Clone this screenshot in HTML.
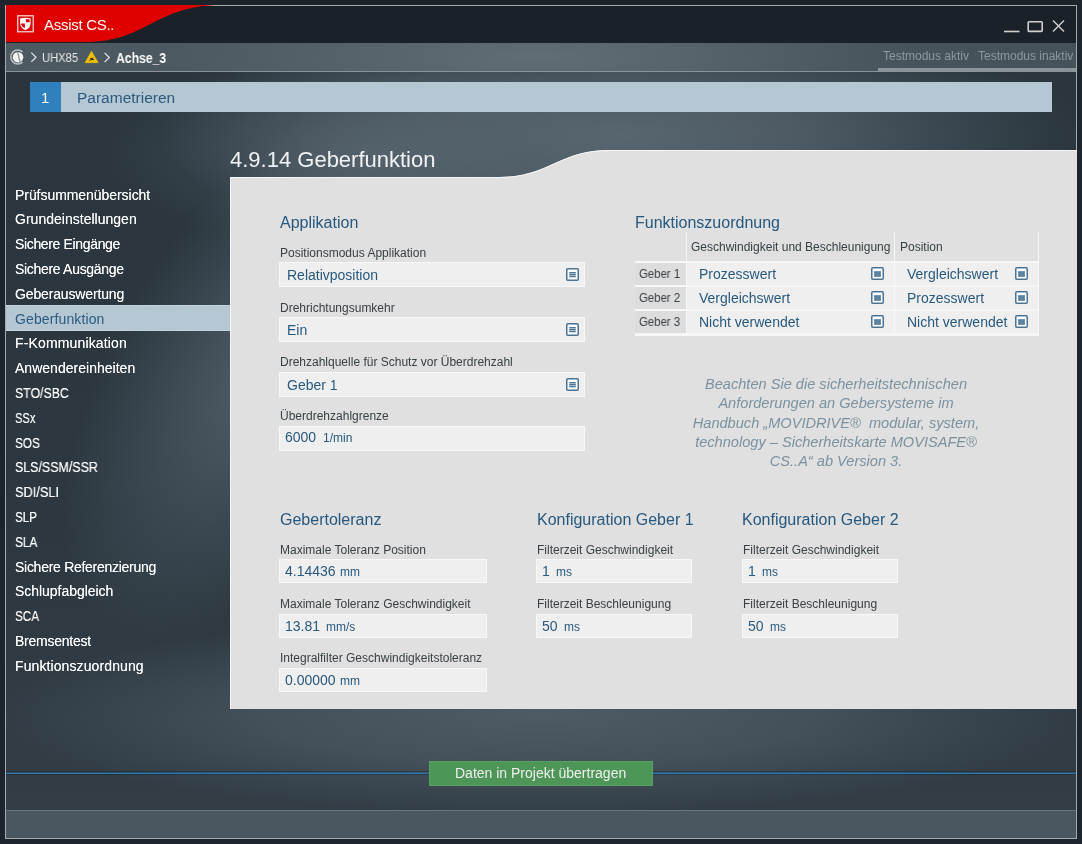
<!DOCTYPE html>
<html><head><meta charset="utf-8">
<style>
*{margin:0;padding:0;box-sizing:border-box}
html,body{width:1082px;height:844px;overflow:hidden;background:#1d242b;font-family:"Liberation Sans",sans-serif;position:relative}
.a{position:absolute}
.t{position:absolute;line-height:0;white-space:nowrap;will-change:transform}
#bg{position:absolute;left:6px;top:72px;width:1070px;height:738px;overflow:hidden;background:linear-gradient(180deg,#2a353d 0%,#2c373f 60%,#323d46 100%)}
.glow{position:absolute;border-radius:50%}
.box{position:absolute;background:#efefef;border:1px solid #f8f8f8}
</style></head><body>
<div class="a" style="left:5px;top:5px;width:1072px;height:834px;border:1px solid #a3aaae"></div>
<div class="a" style="left:6px;top:6px;width:1070px;height:37px;background:#1b2128"></div>
<svg class="a" style="left:6px;top:5px" width="260" height="38"><path d="M0,0 L215,0 C150,0 140,37 80,37 L0,37 Z" fill="#df0000"/></svg>
<div class="a" style="left:6px;top:43px;width:1070px;height:28px;background:radial-gradient(ellipse 380px 70px at 530px 14px,rgba(98,110,118,1),rgba(98,110,118,0)),linear-gradient(90deg,#4e5a62 0%,#4a565e 40%,#46525a 100%)"></div>
<div class="a" style="left:6px;top:71px;width:1070px;height:1px;background:#8b9398"></div>
<div id="bg"><div class="glow" style="left:-46px;top:118px;width:660px;height:320px;transform:rotate(-55deg);background:radial-gradient(closest-side,rgba(84,98,108,1),rgba(84,98,108,0.55) 45%,rgba(84,98,108,0))"></div><div class="glow" style="left:154px;top:-57px;width:920px;height:240px;background:radial-gradient(closest-side,rgba(88,102,112,1),rgba(88,102,112,0.75) 40%,rgba(88,102,112,0))"></div><div class="glow" style="left:94px;top:-20px;width:560px;height:200px;background:radial-gradient(closest-side,rgba(88,102,112,0.7),rgba(88,102,112,0))"></div><div class="glow" style="left:-16px;top:543px;width:1100px;height:200px;background:radial-gradient(closest-side,rgba(78,91,101,1),rgba(78,91,101,0.65) 50%,rgba(78,91,101,0))"></div></div>
<div class="t" style="left:44px;top:25px;font-size:15px;color:#fff;letter-spacing:-0.288px">Assist CS..</div>
<svg class="a" style="left:16px;top:14px" width="20" height="20"><rect x="1.75" y="1.75" width="15.5" height="16" fill="none" stroke="#f4c0c0" stroke-width="1.4"/><path d="M4.1,4.6 Q9.4,3 14.6,4.6 L14.6,9.6 Q14.3,14 9.4,16.3 Q4.5,14 4.1,9.6 Z" fill="#fff"/><path d="M9.9,4.9 Q12.2,5 13.7,5.6 L13.7,8.3 L9.9,8.3 Z" fill="#df0000"/><path d="M5.1,9.6 L8.9,9.6 L8.9,14.2 Q5.8,12.6 5.2,10.4 Z" fill="#df0000"/></svg>
<svg class="a" style="left:1000px;top:15px" width="70" height="22"><path d="M4,16.5 H19.5" stroke="#d0d0d0" stroke-width="1.6"/><rect x="28.2" y="6.8" width="14" height="9.6" fill="none" stroke="#d0d0d0" stroke-width="1.6" rx="0.8"/><path d="M53,5.5 L64,16.6 M64,5.5 L53,16.6" stroke="#d0d0d0" stroke-width="1.4"/></svg>
<div class="t" style="left:41.6px;top:58px;font-size:12px;color:#e8e8e8;transform:scaleX(0.9331);transform-origin:0 0">UHX85</div>
<svg class="a" style="left:6px;top:46px" width="120" height="22"><path d="M16.6,5.9 A7,7 0 1 0 16.6,16.1" fill="none" stroke="#b9bdc0" stroke-width="1.5"/><circle cx="12" cy="11.3" r="5.3" fill="#f2f2f2"/><path d="M11.6,5.8 L14.2,16.8" stroke="#8d9498" stroke-width="1.3"/><path d="M25.3,6.6 L30,11.2 L25.3,15.9" fill="none" stroke="#e8e8e8" stroke-width="1.2"/><path d="M85.5,5.4 L92,16.6 L79.2,16.6 Z" fill="#f0c000" stroke="#f0c000" stroke-width="0.8" stroke-linejoin="round"/><path d="M83.4,14.8 L87.3,11.6 M84.2,12.6 L86.6,12.6 M85.6,13.6 L88,13.6" stroke="#222" stroke-width="1"/><path d="M98.6,6.9 L103.3,11.5 L98.6,16.1" fill="none" stroke="#e8e8e8" stroke-width="1.2"/></svg>
<div class="t" style="left:115.7px;top:58px;font-size:14px;color:#fff;font-weight:bold;transform:scaleX(0.8701);transform-origin:0 0">Achse_3</div>
<div class="t" style="left:882.7px;top:56px;font-size:12px;color:#8e989e;">Testmodus aktiv</div>
<div class="t" style="left:977.5px;top:56px;font-size:12px;color:#8e989e;">Testmodus inaktiv</div>
<div class="a" style="left:878px;top:68px;width:198px;height:3px;background:#8a9499"></div>
<div class="a" style="left:30px;top:82px;width:31px;height:30px;background:#2f80bd"></div>
<div class="a" style="left:61px;top:82px;width:991px;height:30px;background:#b5c7d3"></div>
<div class="t" style="left:41px;top:98px;font-size:15px;color:#fff;">1</div>
<div class="t" style="left:77.4px;top:98px;font-size:15.5px;color:#2a5a80;">Parametrieren</div>
<div class="t" style="left:14.8px;top:195px;font-size:14px;color:#fff;text-shadow:0 0 0.5px rgba(255,255,255,0.7);letter-spacing:-0.054px">Prüfsummenübersicht</div>
<div class="t" style="left:14.8px;top:219px;font-size:14px;color:#fff;text-shadow:0 0 0.5px rgba(255,255,255,0.7);letter-spacing:0.016px">Grundeinstellungen</div>
<div class="t" style="left:14.8px;top:244px;font-size:14px;color:#fff;text-shadow:0 0 0.5px rgba(255,255,255,0.7);letter-spacing:-0.349px">Sichere Eingänge</div>
<div class="t" style="left:14.8px;top:269px;font-size:14px;color:#fff;text-shadow:0 0 0.5px rgba(255,255,255,0.7);letter-spacing:-0.308px">Sichere Ausgänge</div>
<div class="t" style="left:14.8px;top:294px;font-size:14px;color:#fff;text-shadow:0 0 0.5px rgba(255,255,255,0.7);letter-spacing:-0.150px">Geberauswertung</div>
<div class="a" style="left:6px;top:305px;width:224px;height:26px;background:#b5c7d3;border-top:1px solid #c3d3dd;border-bottom:1px solid #c3d3dd"></div>
<div class="t" style="left:14.8px;top:319px;font-size:14px;color:#2b5a80;letter-spacing:0.120px">Geberfunktion</div>
<div class="t" style="left:14.8px;top:343px;font-size:14px;color:#fff;text-shadow:0 0 0.5px rgba(255,255,255,0.7);letter-spacing:0.149px">F-Kommunikation</div>
<div class="t" style="left:14.8px;top:368px;font-size:14px;color:#fff;text-shadow:0 0 0.5px rgba(255,255,255,0.7);letter-spacing:0.020px">Anwendereinheiten</div>
<div class="t" style="left:14.8px;top:393px;font-size:14px;color:#fff;text-shadow:0 0 0.5px rgba(255,255,255,0.7);transform:scaleX(0.8790);transform-origin:0 0">STO/SBC</div>
<div class="t" style="left:14.8px;top:418px;font-size:14px;color:#fff;text-shadow:0 0 0.5px rgba(255,255,255,0.7);transform:scaleX(0.7945);transform-origin:0 0">SSx</div>
<div class="t" style="left:14.8px;top:443px;font-size:14px;color:#fff;text-shadow:0 0 0.5px rgba(255,255,255,0.7);transform:scaleX(0.8417);transform-origin:0 0">SOS</div>
<div class="t" style="left:14.8px;top:467px;font-size:14px;color:#fff;text-shadow:0 0 0.5px rgba(255,255,255,0.7);transform:scaleX(0.8868);transform-origin:0 0">SLS/SSM/SSR</div>
<div class="t" style="left:14.8px;top:492px;font-size:14px;color:#fff;text-shadow:0 0 0.5px rgba(255,255,255,0.7);transform:scaleX(0.9144);transform-origin:0 0">SDI/SLI</div>
<div class="t" style="left:14.8px;top:517px;font-size:14px;color:#fff;text-shadow:0 0 0.5px rgba(255,255,255,0.7);transform:scaleX(0.8307);transform-origin:0 0">SLP</div>
<div class="t" style="left:14.8px;top:542px;font-size:14px;color:#fff;text-shadow:0 0 0.5px rgba(255,255,255,0.7);transform:scaleX(0.8516);transform-origin:0 0">SLA</div>
<div class="t" style="left:14.8px;top:567px;font-size:14px;color:#fff;text-shadow:0 0 0.5px rgba(255,255,255,0.7);letter-spacing:-0.276px">Sichere Referenzierung</div>
<div class="t" style="left:14.8px;top:591px;font-size:14px;color:#fff;text-shadow:0 0 0.5px rgba(255,255,255,0.7);letter-spacing:-0.040px">Schlupfabgleich</div>
<div class="t" style="left:14.8px;top:616px;font-size:14px;color:#fff;text-shadow:0 0 0.5px rgba(255,255,255,0.7);transform:scaleX(0.8354);transform-origin:0 0">SCA</div>
<div class="t" style="left:14.8px;top:641px;font-size:14px;color:#fff;text-shadow:0 0 0.5px rgba(255,255,255,0.7);letter-spacing:-0.240px">Bremsentest</div>
<div class="t" style="left:14.8px;top:666px;font-size:14px;color:#fff;text-shadow:0 0 0.5px rgba(255,255,255,0.7);letter-spacing:0.101px">Funktionszuordnung</div>
<svg class="a" style="left:229px;top:149px" width="848" height="561"><path d="M1,28 L270,28 C320,28 330,1 380,1 L848,1 L848,560 L1,560 Z" fill="#dfe0df"/><path d="M1.5,560 L1.5,28.5 L270,28.5 C320,28.5 330,1.5 380,1.5 L848,1.5" fill="none" stroke="#f6f6f6" stroke-width="1"/></svg>
<div class="t" style="left:229.7px;top:160px;font-size:22px;color:rgba(255,255,255,0.92);">4.9.14 Geberfunktion</div>
<div class="t" style="left:279.6px;top:223px;font-size:16px;color:#27587f;">Applikation</div>
<div class="t" style="left:279.6px;top:253px;font-size:12px;color:#394146;">Positionsmodus Applikation</div>
<div class="box" style="left:279px;top:262px;width:306px;height:25px"></div>
<div class="t" style="left:287px;top:275px;font-size:14px;color:#28597f;">Relativposition</div>
<svg class="a" style="left:566px;top:268px" width="13" height="13"><rect x="0.75" y="0.75" width="11.5" height="11.5" rx="1" fill="#fff" stroke="#4a7393" stroke-width="1.5"/><path d="M3.2,4.8h6.6M3.2,6.7h6.6M3.2,8.6h6.6" stroke="#4d7595" stroke-width="1.4"/></svg>
<div class="t" style="left:279.6px;top:307.5px;font-size:12px;color:#394146;">Drehrichtungsumkehr</div>
<div class="box" style="left:279px;top:317px;width:306px;height:25px"></div>
<div class="t" style="left:287px;top:330px;font-size:14px;color:#28597f;">Ein</div>
<svg class="a" style="left:566px;top:323px" width="13" height="13"><rect x="0.75" y="0.75" width="11.5" height="11.5" rx="1" fill="#fff" stroke="#4a7393" stroke-width="1.5"/><path d="M3.2,4.8h6.6M3.2,6.7h6.6M3.2,8.6h6.6" stroke="#4d7595" stroke-width="1.4"/></svg>
<div class="t" style="left:279.6px;top:362px;font-size:12px;color:#394146;">Drehzahlquelle für Schutz vor Überdrehzahl</div>
<div class="box" style="left:279px;top:371.5px;width:306px;height:25px"></div>
<div class="t" style="left:287px;top:384.5px;font-size:14px;color:#28597f;">Geber 1</div>
<svg class="a" style="left:566px;top:377.5px" width="13" height="13"><rect x="0.75" y="0.75" width="11.5" height="11.5" rx="1" fill="#fff" stroke="#4a7393" stroke-width="1.5"/><path d="M3.2,4.8h6.6M3.2,6.7h6.6M3.2,8.6h6.6" stroke="#4d7595" stroke-width="1.4"/></svg>
<div class="t" style="left:279.6px;top:415.5px;font-size:12px;color:#394146;">Überdrehzahlgrenze</div>
<div class="box" style="left:279px;top:425.5px;width:306px;height:25px"></div>
<div class="t" style="left:285px;top:437px;font-size:14px;color:#28597f;">6000</div>
<div class="t" style="left:323px;top:438px;font-size:12px;color:#28597f;">1/min</div>
<div class="t" style="left:635px;top:223px;font-size:16px;color:#27587f;">Funktionszuordnung</div>
<div class="a" style="left:635px;top:232px;width:404px;height:104px;background:#f7f7f7"></div>
<div class="a" style="left:635px;top:232px;width:51px;height:29px;background:#dfe0df"></div>
<div class="a" style="left:687px;top:232px;width:207px;height:29px;background:#dfe0df"></div>
<div class="a" style="left:895px;top:232px;width:143px;height:29px;background:#dfe0df"></div>
<div class="t" style="left:690.5px;top:247px;font-size:12px;color:#394146;">Geschwindigkeit und Beschleunigung</div>
<div class="t" style="left:899.7px;top:247px;font-size:12px;color:#394146;">Position</div>
<div class="a" style="left:635px;top:263px;width:51px;height:22px;background:#dcdddc"></div>
<div class="a" style="left:687px;top:263px;width:207px;height:22px;background:#efefef"></div>
<div class="a" style="left:895px;top:263px;width:143px;height:22px;background:#efefef"></div>
<div class="t" style="left:639.2px;top:274px;font-size:12px;color:#394146;transform:scaleX(0.9477);transform-origin:0 0">Geber 1</div>
<div class="t" style="left:699px;top:274px;font-size:14px;color:#28597f;">Prozesswert</div>
<div class="t" style="left:907px;top:274px;font-size:14px;color:#28597f;">Vergleichswert</div>
<svg class="a" style="left:871px;top:267px" width="13" height="13"><rect x="0.75" y="0.75" width="11.5" height="11.5" rx="1" fill="#fff" stroke="#4a7393" stroke-width="1.5"/><rect x="3.1" y="4.1" width="6.8" height="5.8" fill="#5b84a3"/></svg>
<svg class="a" style="left:1015px;top:267px" width="13" height="13"><rect x="0.75" y="0.75" width="11.5" height="11.5" rx="1" fill="#fff" stroke="#4a7393" stroke-width="1.5"/><rect x="3.1" y="4.1" width="6.8" height="5.8" fill="#5b84a3"/></svg>
<div class="a" style="left:635px;top:287px;width:51px;height:22px;background:#dcdddc"></div>
<div class="a" style="left:687px;top:287px;width:207px;height:22px;background:#efefef"></div>
<div class="a" style="left:895px;top:287px;width:143px;height:22px;background:#efefef"></div>
<div class="t" style="left:639.2px;top:298px;font-size:12px;color:#394146;transform:scaleX(0.9477);transform-origin:0 0">Geber 2</div>
<div class="t" style="left:699px;top:298px;font-size:14px;color:#28597f;">Vergleichswert</div>
<div class="t" style="left:907px;top:298px;font-size:14px;color:#28597f;">Prozesswert</div>
<svg class="a" style="left:871px;top:291px" width="13" height="13"><rect x="0.75" y="0.75" width="11.5" height="11.5" rx="1" fill="#fff" stroke="#4a7393" stroke-width="1.5"/><rect x="3.1" y="4.1" width="6.8" height="5.8" fill="#5b84a3"/></svg>
<svg class="a" style="left:1015px;top:291px" width="13" height="13"><rect x="0.75" y="0.75" width="11.5" height="11.5" rx="1" fill="#fff" stroke="#4a7393" stroke-width="1.5"/><rect x="3.1" y="4.1" width="6.8" height="5.8" fill="#5b84a3"/></svg>
<div class="a" style="left:635px;top:311px;width:51px;height:22px;background:#dcdddc"></div>
<div class="a" style="left:687px;top:311px;width:207px;height:22px;background:#efefef"></div>
<div class="a" style="left:895px;top:311px;width:143px;height:22px;background:#efefef"></div>
<div class="t" style="left:639.2px;top:322px;font-size:12px;color:#394146;transform:scaleX(0.9477);transform-origin:0 0">Geber 3</div>
<div class="t" style="left:699px;top:322px;font-size:14px;color:#28597f;">Nicht verwendet</div>
<div class="t" style="left:907px;top:322px;font-size:14px;color:#28597f;">Nicht verwendet</div>
<svg class="a" style="left:871px;top:315px" width="13" height="13"><rect x="0.75" y="0.75" width="11.5" height="11.5" rx="1" fill="#fff" stroke="#4a7393" stroke-width="1.5"/><rect x="3.1" y="4.1" width="6.8" height="5.8" fill="#5b84a3"/></svg>
<svg class="a" style="left:1015px;top:315px" width="13" height="13"><rect x="0.75" y="0.75" width="11.5" height="11.5" rx="1" fill="#fff" stroke="#4a7393" stroke-width="1.5"/><rect x="3.1" y="4.1" width="6.8" height="5.8" fill="#5b84a3"/></svg>
<div class="t" style="left:636px;width:400px;text-align:center;top:384.3px;font-size:14.6px;font-style:italic;color:#7b91a1">Beachten Sie die sicherheitstechnischen</div>
<div class="t" style="left:636px;width:400px;text-align:center;top:403.4px;font-size:14.6px;font-style:italic;color:#7b91a1">Anforderungen an Gebersysteme im</div>
<div class="t" style="left:636px;width:400px;text-align:center;top:422.5px;font-size:14.6px;font-style:italic;color:#7b91a1">Handbuch „MOVIDRIVE®&nbsp; modular, system,</div>
<div class="t" style="left:636px;width:400px;text-align:center;top:441.6px;font-size:14.6px;font-style:italic;color:#7b91a1">technology – Sicherheitskarte MOVISAFE®</div>
<div class="t" style="left:636px;width:400px;text-align:center;top:460.7px;font-size:14.6px;font-style:italic;color:#7b91a1">CS..A“ ab Version 3.</div>
<div class="t" style="left:279.6px;top:520px;font-size:16px;color:#27587f;">Gebertoleranz</div>
<div class="t" style="left:279.6px;top:550px;font-size:12px;color:#394146;">Maximale Toleranz Position</div>
<div class="box" style="left:279px;top:559px;width:208px;height:24px"></div>
<div class="t" style="left:285px;top:570.5px;font-size:14px;color:#28597f;">4.14436</div>
<div class="t" style="left:340.3px;top:571.5px;font-size:12px;color:#28597f;">mm</div>
<div class="t" style="left:279.6px;top:604px;font-size:12px;color:#394146;">Maximale Toleranz Geschwindigkeit</div>
<div class="box" style="left:279px;top:614px;width:208px;height:24px"></div>
<div class="t" style="left:285px;top:625.5px;font-size:14px;color:#28597f;">13.81</div>
<div class="t" style="left:325.7px;top:626.5px;font-size:12px;color:#28597f;">mm/s</div>
<div class="t" style="left:279.6px;top:658px;font-size:12px;color:#394146;">Integralfilter Geschwindigkeitstoleranz</div>
<div class="box" style="left:279px;top:668px;width:208px;height:24px"></div>
<div class="t" style="left:285px;top:679.5px;font-size:14px;color:#28597f;">0.00000</div>
<div class="t" style="left:340.3px;top:680.5px;font-size:12px;color:#28597f;">mm</div>
<div class="t" style="left:536.6px;top:520px;font-size:16px;color:#27587f;">Konfiguration Geber 1</div>
<div class="t" style="left:536.6px;top:550px;font-size:12px;color:#394146;">Filterzeit Geschwindigkeit</div>
<div class="box" style="left:536px;top:559px;width:156px;height:24px"></div>
<div class="t" style="left:542px;top:570.5px;font-size:14px;color:#28597f;">1</div>
<div class="t" style="left:556.2px;top:571.5px;font-size:12px;color:#28597f;">ms</div>
<div class="t" style="left:536.6px;top:604px;font-size:12px;color:#394146;">Filterzeit Beschleunigung</div>
<div class="box" style="left:536px;top:614px;width:156px;height:24px"></div>
<div class="t" style="left:542px;top:625.5px;font-size:14px;color:#28597f;">50</div>
<div class="t" style="left:564px;top:626.5px;font-size:12px;color:#28597f;">ms</div>
<div class="t" style="left:741.8px;top:520px;font-size:16px;color:#27587f;">Konfiguration Geber 2</div>
<div class="t" style="left:742.6px;top:550px;font-size:12px;color:#394146;">Filterzeit Geschwindigkeit</div>
<div class="box" style="left:742px;top:559px;width:156px;height:24px"></div>
<div class="t" style="left:748px;top:570.5px;font-size:14px;color:#28597f;">1</div>
<div class="t" style="left:762px;top:571.5px;font-size:12px;color:#28597f;">ms</div>
<div class="t" style="left:742.6px;top:604px;font-size:12px;color:#394146;">Filterzeit Beschleunigung</div>
<div class="box" style="left:742px;top:614px;width:156px;height:24px"></div>
<div class="t" style="left:748px;top:625.5px;font-size:14px;color:#28597f;">50</div>
<div class="t" style="left:770px;top:626.5px;font-size:12px;color:#28597f;">ms</div>
<div class="a" style="left:6px;top:771px;width:1070px;height:1px;background:rgba(25,30,36,0.4)"></div>
<div class="a" style="left:6px;top:772px;width:1070px;height:1px;background:rgba(46,120,178,0.3)"></div>
<div class="a" style="left:6px;top:773px;width:1070px;height:1px;background:#2e78b2"></div>
<div class="a" style="left:6px;top:774px;width:1070px;height:1px;background:rgba(25,30,36,0.4)"></div>
<div class="a" style="left:429px;top:761px;width:224px;height:25px;background:#4e9558;border:1px solid #56a260"></div>
<div class="t" style="left:455.4px;top:773px;font-size:14px;color:#f0f0f0;">Daten in Projekt übertragen</div>
<div class="a" style="left:6px;top:810px;width:1070px;height:28px;background:#4b5760;border-top:1px solid #67727a"></div>
</body></html>
